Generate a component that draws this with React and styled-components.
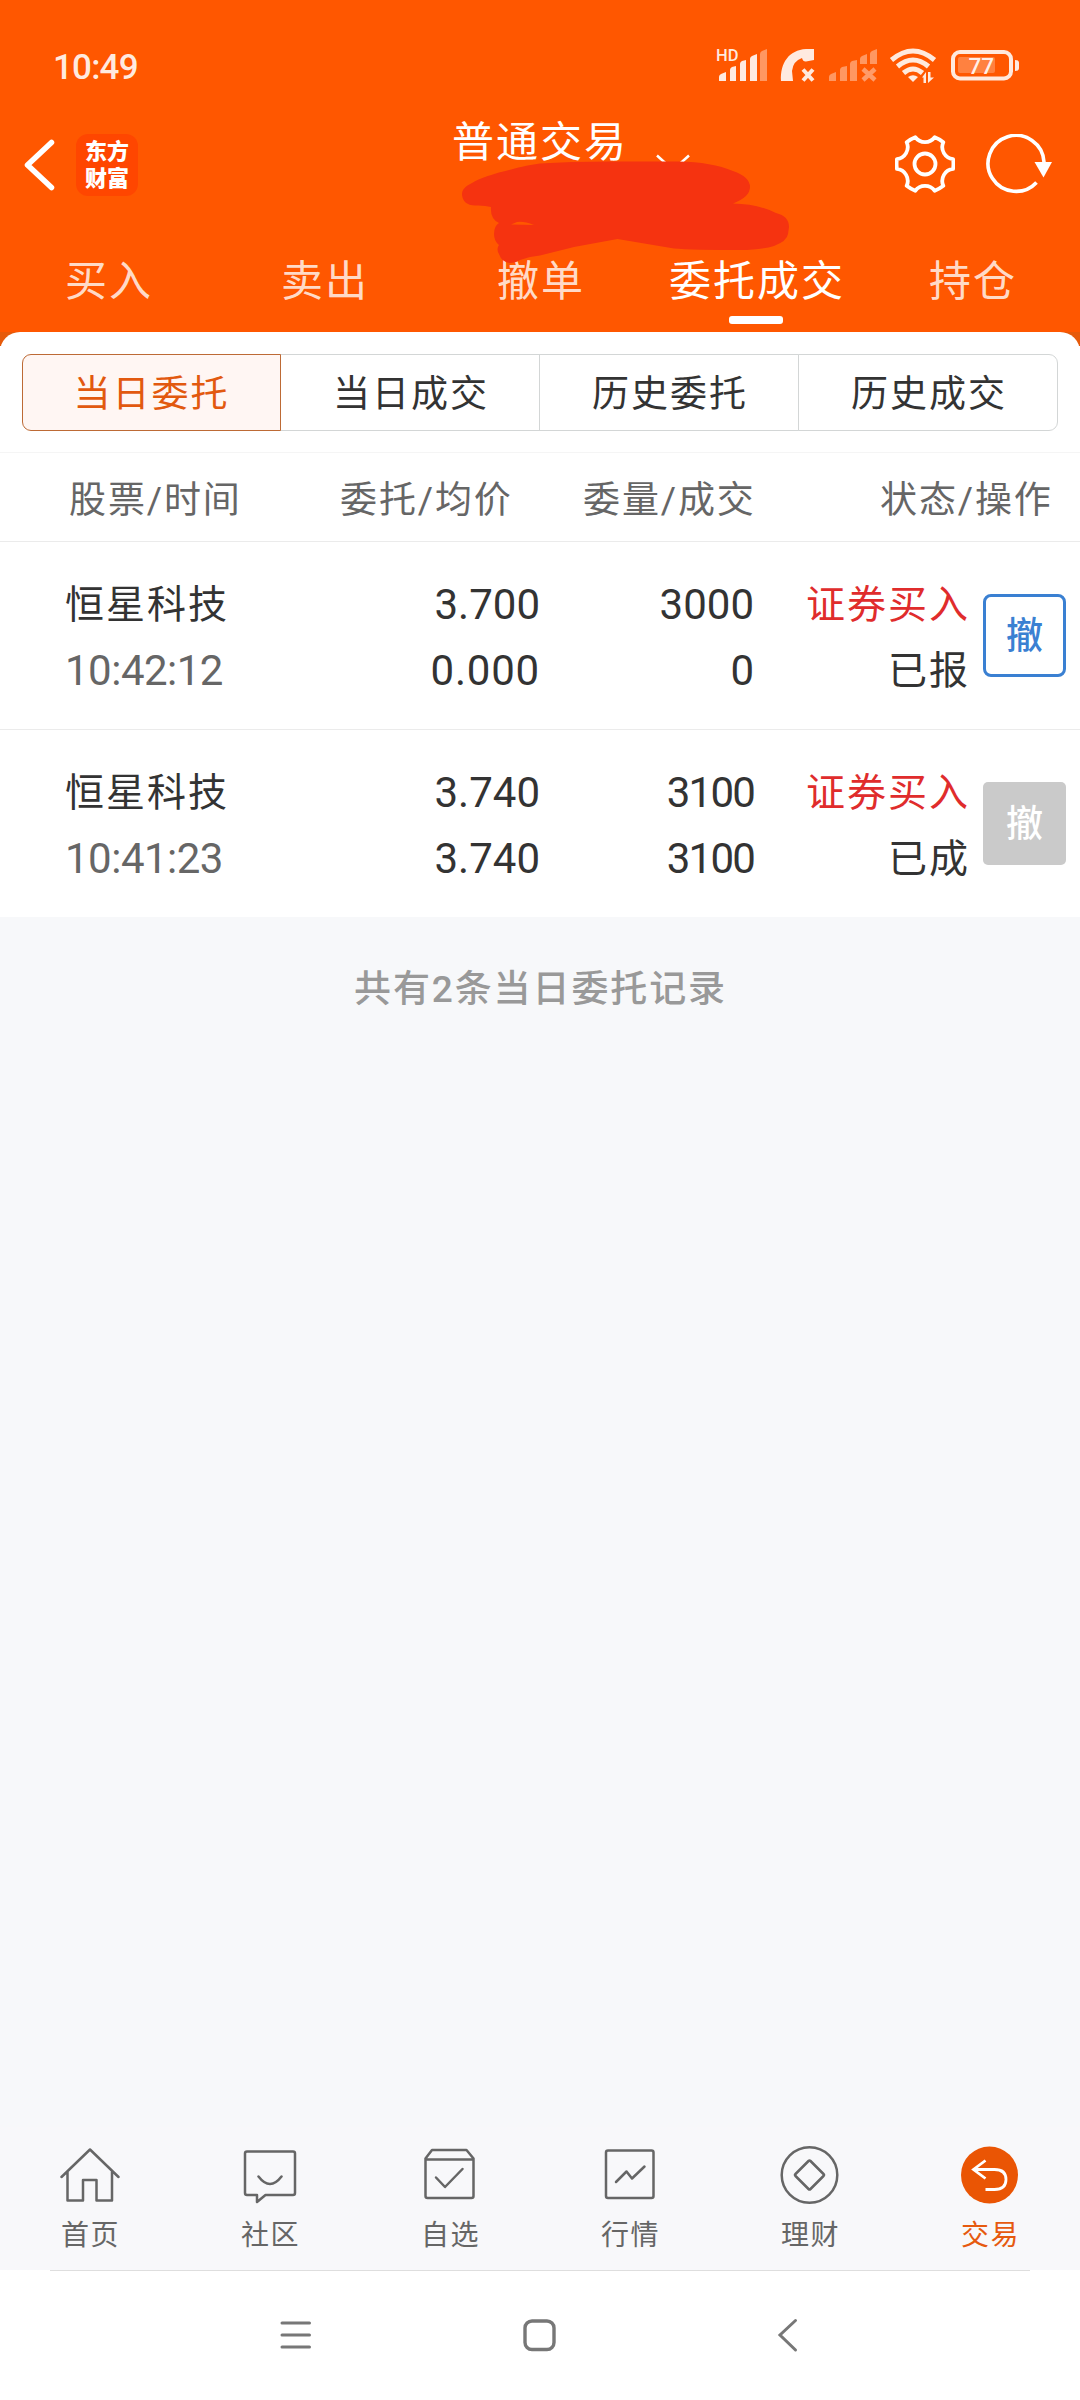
import styled, { createGlobalStyle } from 'styled-components'


const GlobalStyle = createGlobalStyle`
  * {
    box-sizing: border-box;
  }

  body {
    margin: 0;
    background: #f7f8fa;
    font-family: Roboto, "Noto Sans CJK SC", sans-serif;
    color: #333;
  }

  svg {
    display: block;
    flex: none;
  }
`

const Screen = styled.div`
  display: flex;
  flex-direction: column;
  width: 1080px;
  height: 2400px;
  overflow: hidden;
  background: #f7f8fa;
`

const Top = styled.header`
  position: relative;
  height: 332px;
  background: #ff5700;
  color: #fff;
`

const StatusBar = styled.div`
  display: flex;
  align-items: center;
  justify-content: space-between;
  height: 100px;
  padding: 32px 59px 0 53px;
`

const Clock = styled.span`
  padding-top: 3px;
  font-size: 35px;
  font-weight: 500;
  letter-spacing: -0.8px;
  line-height: 40px;
  color: rgba(255, 255, 255, 0.88);
`

const TitleBar = styled.div`
  display: grid;
  grid-template-columns: 1fr auto 1fr;
  align-items: center;
  height: 130px;
  padding: 0 27px 0 24px;
`

const TitleSide = styled.div`
  display: flex;
  align-items: center;
  gap: ${(p) => p.$gap}px;
  justify-content: ${(p) => (p.$end ? 'flex-end' : 'flex-start')};
`

const Logo = styled.div`
  display: flex;
  flex-direction: column;
  align-items: center;
  justify-content: center;
  width: 62px;
  height: 62px;
  padding-bottom: 1px;
  border-radius: 12px;
  background: #ff4600;
  font-size: 22px;
  font-weight: 900;
  line-height: 27px;
`

const Title = styled.h1`
  align-self: start;
  margin: 18px 0 0;
  padding-left: 3px;
  font-size: 42px;
  font-weight: 400;
  letter-spacing: 2px;
  line-height: 50px;
`

const Tabs = styled.nav`
  display: grid;
  grid-template-columns: repeat(5, 1fr);
  height: 102px;
`

const Tab = styled.a`
  position: relative;
  display: flex;
  align-items: center;
  justify-content: center;
  padding: 0 0 7px 2px;
  font-size: 42px;
  letter-spacing: 2px;
  color: ${(p) => (p.$active ? '#fff' : 'rgba(255, 255, 255, 0.8)')};

  &::after {
    content: "";
    display: ${(p) => (p.$active ? 'block' : 'none')};
    position: absolute;
    left: 81px;
    bottom: 8px;
    width: 54px;
    height: 8px;
    border-radius: 3px;
    background: #fff;
  }
`

const Scribble = styled.svg`
  position: absolute;
  left: 450px;
  top: 145px;
`

const PanelEdge = styled.div`
  background: linear-gradient(#e65a0a 14px, #fff 14px);
`

const Panel = styled.section`
  height: 121px;
  padding: 22px;
  border-radius: 20px 20px 0 0;
  border-bottom: 1px solid #f5f5f5;
  background: #fff;
`

const Segments = styled.div`
  display: grid;
  grid-template-columns: repeat(4, 1fr);
  height: 77px;
`

const Segment = styled.button`
  margin: 0 0 0 ${(p) => (p.$first ? 0 : '-1px')};
  padding: 4px 0 0 ${(p) => (p.$first ? 0 : 2)}px;
  border: 1px solid ${(p) => (p.$active ? '#bd6a35' : '#d3d6d6')};
  border-radius: ${(p) => (p.$first ? '9px 0 0 9px' : p.$last ? '0 9px 9px 0' : 0)};
  background: ${(p) => (p.$active ? '#fff6f3' : '#fff')};
  position: relative;
  z-index: ${(p) => (p.$active ? 1 : 0)};
  font: 37px/44px Roboto, "Noto Sans CJK SC", sans-serif;
  letter-spacing: 2px;
  color: ${(p) => (p.$active ? '#e2590f' : '#333')};
`

const Columns = styled.div`
  display: grid;
  grid-template-columns: 271px 243px 297px auto;
  align-items: center;
  height: 89px;
  padding-left: 69px;
  border-bottom: 1px solid #ebebeb;
  background: #fff;
  font-size: 37px;
  letter-spacing: 1.9px;
  color: #666;
`

const Row = styled.div`
  display: grid;
  grid-template-columns: 275px 200px 214px 214px 83px;
  height: ${(p) => (p.$last ? 187 : 188)}px;
  padding: 28px 0 0 65px;
  border-bottom: ${(p) => (p.$last ? 'none' : '1px solid #ebebeb')};
  background: #fff;
`

const Cell = styled.div`
  display: flex;
  flex-direction: column;
  padding-top: 2px;
  text-align: ${(p) => (p.$left ? 'left' : 'right')};
`

const Name = styled.span`
  font-size: 39px;
  line-height: 66px;
  letter-spacing: 2px;
  margin-right: -2px;
  color: ${(p) => (p.$buy ? '#e02c2c' : '#333')};
`

const Num = styled.span`
  font-size: 42px;
  line-height: 66px;
  letter-spacing: ${(p) => p.$spacing || 0}px;
  color: ${(p) => (p.$muted ? '#666' : '#333')};
`

const Cancel = styled.button`
  width: 83px;
  height: 83px;
  margin: 24px 0 0 15px;
  padding: 3px 0 0;
  border: ${(p) => (p.disabled ? 'none' : '3px solid #3a80d2')};
  border-radius: ${(p) => (p.disabled ? 5 : 8)}px;
  background: ${(p) => (p.disabled ? '#cacaca' : '#fff')};
  color: ${(p) => (p.disabled ? '#fff' : '#3a80d2')};
  font: 500 37px/44px Roboto, "Noto Sans CJK SC", sans-serif;
`

const Count = styled.p`
  flex: 1;
  margin: 0;
  padding: 51px 0 0 1px;
  text-align: center;
  font-size: 37px;
  font-weight: 500;
  letter-spacing: 1.9px;
  line-height: 44px;
  color: #999;
`

const BottomNav = styled.nav`
  display: grid;
  grid-template-columns: repeat(6, 1fr);
  height: 143px;
  background: #f8f8fa;
`

const NavItem = styled.a`
  display: flex;
  flex-direction: column;
  align-items: center;
  padding-top: 18px;
  font-size: 28px;
  letter-spacing: 1.5px;
  line-height: 34px;
  color: ${(p) => (p.$active ? '#e65a0f' : '#666')};

  svg {
    margin-bottom: 14px;
  }

  span {
    padding-left: 1px;
  }
`

const SystemNav = styled.footer`
  display: flex;
  align-items: flex-start;
  justify-content: center;
  height: 130px;
  background: #fff;

  &::before {
    content: "";
    position: absolute;
    width: 980px;
    height: 1px;
    background: #dedede;
  }
`

const SystemIcons = styled.div`
  display: flex;
  gap: 208px;
  padding: 45px 2px 0 0;
`

const orders = [
  { name: '恒星科技', time: '10:42:12', price: '3.700', avg: '0.000', qty: '3000', done: '0', state: '已报', open: true },
  { name: '恒星科技', time: '10:41:23', price: '3.740', avg: '3.740', qty: '3100', done: '3100', state: '已成', open: false },
]

const spacing = (value) => {
  if (value.includes(':')) return -0.5
  if (value.includes('1')) return -1.8
  return value === '0.000' ? 0.8 : 0
}

// gear outline: six flat teeth with hollows between them
const gearPath = () => {
  const at = (deg, r) => {
    const a = (deg * Math.PI) / 180
    return `${(30 + r * Math.cos(a)).toFixed(2)} ${(30 + r * Math.sin(a)).toFixed(2)}`
  }
  let d = `M${at(-10, 28.5)}`
  for (let k = 0; k < 6; k++) {
    const c = k * 60
    d += `Q${at(c, 28.8)} ${at(c + 10, 28.5)}`
    d += `C${at(c + 16, 20.8)} ${at(c + 44, 20.8)} ${at(c + 50, 28.5)}`
  }
  return d + 'Z'
}

const StatusIcons = () => (
  <svg width="306" height="40" viewBox="715 47 306 40" fill="#fff" fillOpacity="0.88">
    <text x="716" y="62" fontSize="16.5" fontWeight="500" fontFamily="Roboto">HD</text>
    <path d="M719 82v-4q0-2 2-3l5-2v9zM730 82V71q0-2 2-3l4-1v15zM740 82V65q0-2 2-3l4-1v21zM750 82V60q0-2 2-3l5-2v27z" />
    <path fillOpacity="0.38" d="M760 82V55q0-2 2-3l5-2v32z" />
    <path d="M781 82C780 64 789 51 806 50h8v11l-8 1.5q-3 .3-4-3.5-9 3-10 13l1 10z" />
    <path d="M803 70.500l10 11m0-11l-10 11" stroke="#ffe9dd" strokeWidth="4" fill="none" />
    <g fillOpacity="0.38">
      <path d="M829 82v-4q0-2 2-3l5-2v9zM840 82V71q0-2 2-3l5-1v15zM850 82V65q0-2 2-3l5-1v21zM860 65v-5q0-2 2-3l5-2v10zM870 65V55q0-2 2-3l5-2v15z" />
    </g>
    <path d="M863 70l12 11m0-11l-12 11" stroke="#ff9b68" strokeWidth="4.500" fill="none" />
    <g fill="none" stroke="#ffe9dd" strokeWidth="5">
      <path d="M891.500 61q21.500-18 43 0" />
      <path d="M897.500 67.500q15.500-13 31 0" />
      <path d="M903.500 74q9.500-8 19 0" />
    </g>
    <path d="M908 78q5-3.500 10 0l-5 5z" />
    <path d="M922 78.500l4-5.500v11h-2.500v-5.500zM928 73h2.500v5.500h3.500l-6 5.500z" />
    <rect x="953" y="53" width="58" height="26.500" rx="7" fill="none" stroke="#ffe9dd" strokeWidth="4" />
    <rect x="958" y="58" width="37" height="16" rx="2" fillOpacity="0.25" />
    <path d="M1015 61q4 0 4 3v5q0 3-4 3z" />
    <text x="968.500" y="74.500" fontSize="22.500" fontFamily="Roboto" fontWeight="500">77</text>
  </svg>
)

const line = { fill: 'none', stroke: '#666', strokeWidth: 2.5, strokeLinecap: 'round', strokeLinejoin: 'round' }

const navItems = [
  {
    label: '首页',
    icon: <path {...line} d="M1.500 32L30 4.500 58.500 32M7.500 27v28.500H23V35h13.500v20.500H52V27" />,
  },
  {
    label: '社区',
    icon: <path {...line} d="M7 6.500h46q2 0 2 2V48q0 2-2 2H25.500L17 57v-7H7q-2 0-2-2V8.500q0-2 2-2zM18.500 31.500q11.500 15 23 0" />,
  },
  {
    label: '自选',
    icon: <path {...line} d="M5.500 13.500L12 5h34.500l7 8.500V51q0 2-2 2h-44q-2 0-2-2zM5.500 14.500h48M16 32.500l9 9.500 17.500-18" />,
  },
  {
    label: '行情',
    icon: <path {...line} d="M8 5.500h43.500q2 0 2 2V51q0 2-2 2H8q-2 0-2-2V7.500q0-2 2-2zM16 37l10.500-10.500 5.500 7L44.500 21.500" />,
  },
  {
    label: '理财',
    icon: (
      <g {...line}>
        <circle cx="29.500" cy="30" r="27.800" />
        <path d="M28.500 16q1-1 2 0L43.500 29q1 1 0 2L30.500 44q-1 1-2 0L15.500 31q-1-1 0-2z" />
      </g>
    ),
  },
  {
    label: '交易',
    active: true,
    icon: (
      <g>
        <circle cx="29.500" cy="30" r="28.500" fill="#ea5504" />
        <path d="M25.500 15.500L13.500 24.500l12 9M14 24.500h20.500q11.500 0 11.500 10t-11.500 10H25.500" fill="none" stroke="#fff" strokeWidth="2.800" />
      </g>
    ),
  },
]

const Header = () => (
  <Top>
    <StatusBar>
      <Clock>10:49</Clock>
      <StatusIcons />
    </StatusBar>

    <TitleBar>
      <TitleSide $gap={21}>
        <svg width="31" height="54" viewBox="0 0 31 54">
          <path d="M27.500 4.500L3.500 27l24 22.500" fill="none" stroke="#fff" strokeWidth="5.500" strokeLinecap="round" strokeLinejoin="round" />
        </svg>
        <Logo>
          <span>东方</span>
          <span>财富</span>
        </Logo>
      </TitleSide>
      <Title>普通交易</Title>
      <TitleSide $end $gap={30}>
        <svg width="60" height="62" viewBox="0 0 60 62" fill="none" stroke="#fff" strokeWidth="3.800" strokeLinejoin="round">
          <path d={gearPath()} />
          <circle cx="30" cy="30" r="10.500" />
        </svg>
        <svg width="68" height="62" viewBox="0 0 68 62">
          <path d="M59 28A28 28 0 1 0 51.500 48.500" fill="none" stroke="#fff" strokeWidth="3.600" />
          <path d="M49.500 28H67L58.500 43.500z" fill="#fff" />
        </svg>
      </TitleSide>
    </TitleBar>

    <Tabs>
      <Tab>买入</Tab>
      <Tab>卖出</Tab>
      <Tab>撤单</Tab>
      <Tab $active>委托成交</Tab>
      <Tab>持仓</Tab>
    </Tabs>

    {/* account number, painted over */}
    <Scribble width="345" height="125" viewBox="450 145 345 125">
      <path d="M657 155.500L673 170L689 155.500" fill="none" stroke="#fff" strokeWidth="2.500" />
      <path
        fill="#f53310"
        fillRule="evenodd"
        d="M540 163.500C522 166 510 170 499 172.500C488 176 480 178 472 183C464 187 462 190 462 195C463 202 467 205 475 205.500Q484 205 491 207Q490 219 499 223Q494 226 494 234Q494 241 499 245Q496 249 499 254Q502 263 511 263Q516 263 520 260Q530 256 540 255.500Q558 251 574 247L617.500 239L674 248.500Q690 250 747 250Q764 249 774 246Q787 241 788 234L789 227Q789 216 776 213Q758 204 733 203.500Q750 197 750 187Q750 177 733 171Q712 162 678 161.500H609Q570 161.500 540 163.500ZM511 224.500L517 222Q524 221 534 225Z"
      />
    </Scribble>
  </Top>
)

const OrderRow = ({ order, last }) => (
  <Row $last={last}>
    <Cell $left>
      <Name>{order.name}</Name>
      <Num $muted $spacing={spacing(order.time)}>{order.time}</Num>
    </Cell>
    <Cell>
      <Num $spacing={spacing(order.price)}>{order.price}</Num>
      <Num $spacing={spacing(order.avg)}>{order.avg}</Num>
    </Cell>
    <Cell>
      <Num $spacing={spacing(order.qty)}>{order.qty}</Num>
      <Num $spacing={spacing(order.done)}>{order.done}</Num>
    </Cell>
    <Cell>
      <Name $buy>证券买入</Name>
      <Name>{order.state}</Name>
    </Cell>
    <Cancel disabled={!order.open}>撤</Cancel>
  </Row>
)

const App = () => {
  return (
    <Screen>
      <GlobalStyle />
      <Header />

      <PanelEdge>
        <Panel>
          <Segments>
            <Segment $first $active>当日委托</Segment>
            <Segment>当日成交</Segment>
            <Segment>历史委托</Segment>
            <Segment $last>历史成交</Segment>
          </Segments>
        </Panel>
      </PanelEdge>

      <Columns>
        <span>股票/时间</span>
        <span>委托/均价</span>
        <span>委量/成交</span>
        <span>状态/操作</span>
      </Columns>

      {orders.map((order, i) => (
        <OrderRow key={order.time} order={order} last={i === orders.length - 1} />
      ))}

      <Count>共有2条当日委托记录</Count>

      <BottomNav>
        {navItems.map((item) => (
          <NavItem key={item.label} $active={item.active}>
            <svg width="60" height="60" viewBox="0 0 60 60">{item.icon}</svg>
            <span>{item.label}</span>
          </NavItem>
        ))}
      </BottomNav>

      <SystemNav>
        <SystemIcons>
          <svg width="40" height="40" viewBox="0 0 40 40" fill="none" stroke="#777" strokeWidth="3" strokeLinecap="round">
            <path d="M11 8h27.500M11 20h27.500M11 32h27.500" />
          </svg>
          <svg width="40" height="40" viewBox="0 0 40 40" fill="none" stroke="#777" strokeWidth="3.400">
            <rect x="6" y="6" width="29" height="28.500" rx="7" />
          </svg>
          <svg width="40" height="40" viewBox="0 0 40 40" fill="none" stroke="#777" strokeWidth="3" strokeLinecap="round">
            <path d="M28.500 5.500L13 20l15.500 15" />
          </svg>
        </SystemIcons>
      </SystemNav>
    </Screen>
  )
}

export default App
